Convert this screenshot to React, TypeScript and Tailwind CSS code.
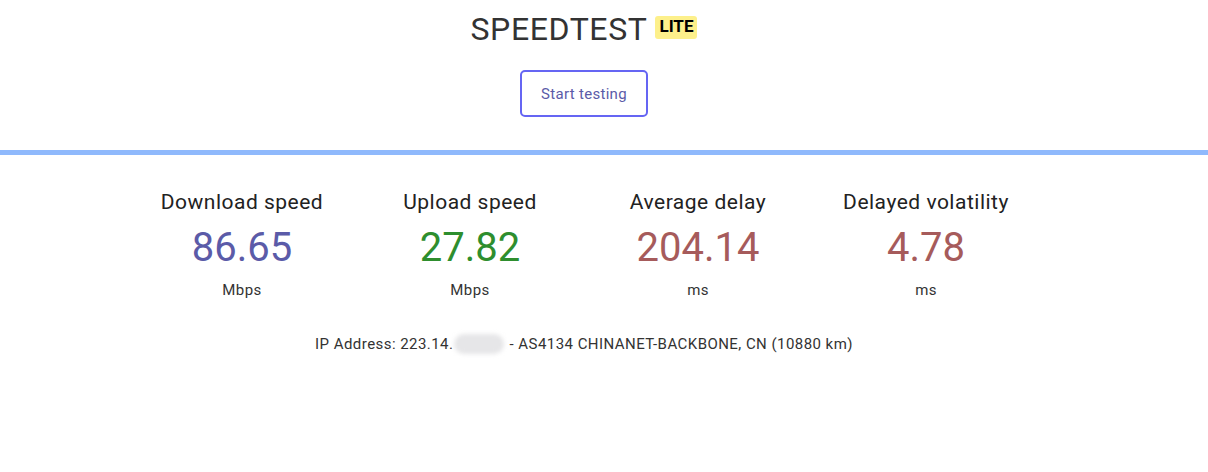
const stats = [
  { label: "Download speed", value: "86.65", unit: "Mbps", color: "text-[#5b5ba8]" },
  { label: "Upload speed", value: "27.82", unit: "Mbps", color: "text-[#2e8e2e]" },
  { label: "Average delay", value: "204.14", unit: "ms", color: "text-[#a65b5b]" },
  { label: "Delayed volatility", value: "4.78", unit: "ms", color: "text-[#a65b5b]" },
];

export default function App() {
  return (
    <div className="w-[1208px] h-[472px] bg-white font-['Roboto',sans-serif] text-[#333]">
      {/* Header */}
      <div className="w-[1168px] flex flex-col items-center pt-[11px]">
        <div className="flex items-center h-[36px]">
          <h1 className="text-[32px] leading-[36px] tracking-[0.6px] text-[#333]">SPEEDTEST</h1>
          <span className="ml-[8px] mt-[-4px] bg-[#fdf08b] rounded-[3px] px-[4px] h-[23px] flex items-center text-[17px] font-bold text-black">
            LITE
          </span>
        </div>
        <button className="mt-[23px] w-[128px] h-[47px] border-2 border-[#6565f3] rounded-[5px] text-[15px] tracking-[0.3px] pt-[2px] text-[#5b5ba8] bg-white">
          Start testing
        </button>
      </div>

      {/* Divider */}
      <div className="mt-[33px] h-[5px] bg-[#8fb9fc]" />

      {/* Results */}
      <div className="w-[1168px] flex justify-center pt-[33px]">
        {stats.map((s) => (
          <div key={s.label} className="w-[228px] flex flex-col items-center">
            <div className="text-[21px] leading-[28px] tracking-[0.5px] text-[#222]">{s.label}</div>
            <div className={`text-[40px] leading-[46px] mt-[9px] ${s.color}`}>{s.value}</div>
            <div className="text-[15px] leading-[20px] tracking-[0.4px] mt-[9px] text-[#333]">{s.unit}</div>
          </div>
        ))}
      </div>

      <div className="w-[1168px] flex justify-center mt-[34px] text-[15px] leading-[20px] tracking-[0.45px] text-[#333]">
        <span>IP Address: 223.14.</span>
        <span className="w-[50px] h-[20px] mx-[1px] rounded-full bg-[#e6e6e8] blur-[2px]" />
        <span>&nbsp;- AS4134 CHINANET-BACKBONE, CN (10880 km)</span>
      </div>
    </div>
  );
}
